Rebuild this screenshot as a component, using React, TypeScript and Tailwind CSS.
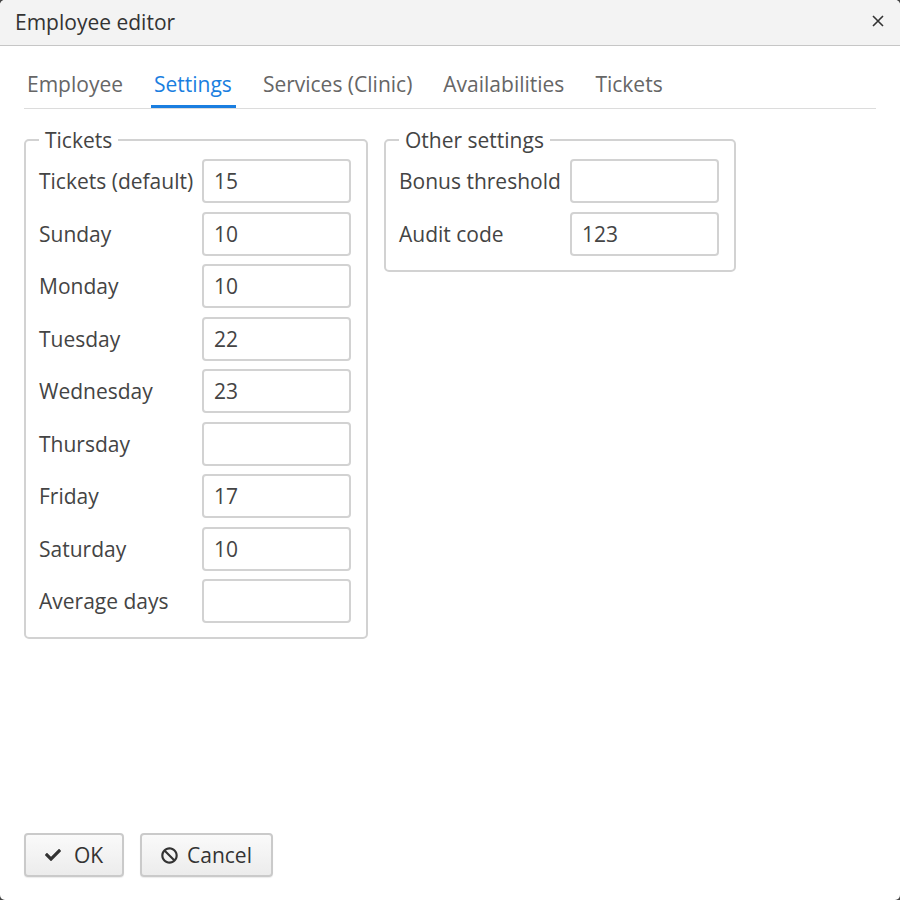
import React from 'react';
import { FaCheck, FaBan } from 'react-icons/fa';

const tabs = ['Employee', 'Settings', 'Services (Clinic)', 'Availabilities', 'Tickets'];

const ticketRows: [string, string][] = [
  ['Tickets (default)', '15'],
  ['Sunday', '10'],
  ['Monday', '10'],
  ['Tuesday', '22'],
  ['Wednesday', '23'],
  ['Thursday', ''],
  ['Friday', '17'],
  ['Saturday', '10'],
  ['Average days', ''],
];

const otherRows: [string, string][] = [
  ['Bonus threshold', ''],
  ['Audit code', '123'],
];

const Field: React.FC<{ label: string; value: string; labelWidth: string }> = ({ label, value, labelWidth }) => (
  <div className="flex items-center h-[44px]">
    <span className={`${labelWidth} shrink-0 whitespace-nowrap text-[#444]`}>{label}</span>
    <input
      readOnly
      value={value}
      className="w-[149px] h-[44px] rounded-[4px] border-2 border-[#d2d2d2] bg-white px-[10px] text-[#444] outline-none"
    />
  </div>
);

export default function App() {
  return (
    <div className="w-[900px] h-[900px] bg-[#444]">
      <div
        className="w-[900px] h-[900px] bg-white rounded-[5px] overflow-hidden flex flex-col text-[21px] leading-[30px]"
        style={{ fontFamily: '"Open Sans", "Liberation Sans", sans-serif' }}
      >
        {/* Header */}
        <div className="h-[46px] shrink-0 bg-[#f3f3f3] border-b border-[#c6c6c6] flex items-center justify-between pl-[15px] pr-[16px]">
          <span className="text-[#333] -mt-[2px]">Employee editor</span>
          <svg width="12" height="12" viewBox="0 0 12 12" className="mt-[-4px]">
            <path d="M1 1 L11 11 M11 1 L1 11" stroke="#333" strokeWidth="1.6" />
          </svg>
        </div>

        {/* Content */}
        <div className="flex-1 px-6">
          <div className="pt-[23px] flex gap-6 border-b border-[#dcdcdc]">
            {tabs.map((t) => (
              <div
                key={t}
                className={`pl-[3px] pr-[4px] pb-[6px] border-b-[3px] ${
                  t === 'Settings' ? 'border-[#1a7ee0] text-[#1a7ee0]' : 'border-transparent text-[#666]'
                }`}
              >
                {t}
              </div>
            ))}
          </div>

          <div className="mt-4 flex gap-[16px] items-start">
            <fieldset className="w-[344px] border-2 border-[#d2d2d2] rounded-[5px] pl-[13px] pr-[15px] pb-[14px]">
              <legend className="px-1.5 text-[#444]">Tickets</legend>
              <div className="pt-[4px] flex flex-col gap-[8.5px]">
                {ticketRows.map(([l, v]) => (
                  <Field key={l} label={l} value={v} labelWidth="w-[163px]" />
                ))}
              </div>
            </fieldset>

            <fieldset className="w-[351px] border-2 border-[#d2d2d2] rounded-[5px] pl-[13px] pr-[15px] pb-[14px]">
              <legend className="px-1.5 text-[#444]">Other settings</legend>
              <div className="pt-[4px] flex flex-col gap-[8.5px]">
                {otherRows.map(([l, v]) => (
                  <Field key={l} label={l} value={v} labelWidth="w-[171px]" />
                ))}
              </div>
            </fieldset>
          </div>
        </div>

        {/* Footer */}
        <div className="shrink-0 px-6 pb-[23px] flex gap-4">
          <button className="w-[100px] h-[44px] flex items-center justify-center gap-[13px] rounded-[4px] border-2 border-[#cacaca] bg-gradient-to-b from-[#fafafa] to-[#ececec] text-[#333] shadow-[0_1px_1px_rgba(0,0,0,0.08)]">
            <FaCheck size={16} />
            <span>OK</span>
          </button>
          <button className="w-[133px] h-[44px] flex items-center justify-center gap-[9px] rounded-[4px] border-2 border-[#cacaca] bg-gradient-to-b from-[#fafafa] to-[#ececec] text-[#333] shadow-[0_1px_1px_rgba(0,0,0,0.08)]">
            <FaBan size={17} />
            <span>Cancel</span>
          </button>
        </div>
      </div>
    </div>
  );
}
